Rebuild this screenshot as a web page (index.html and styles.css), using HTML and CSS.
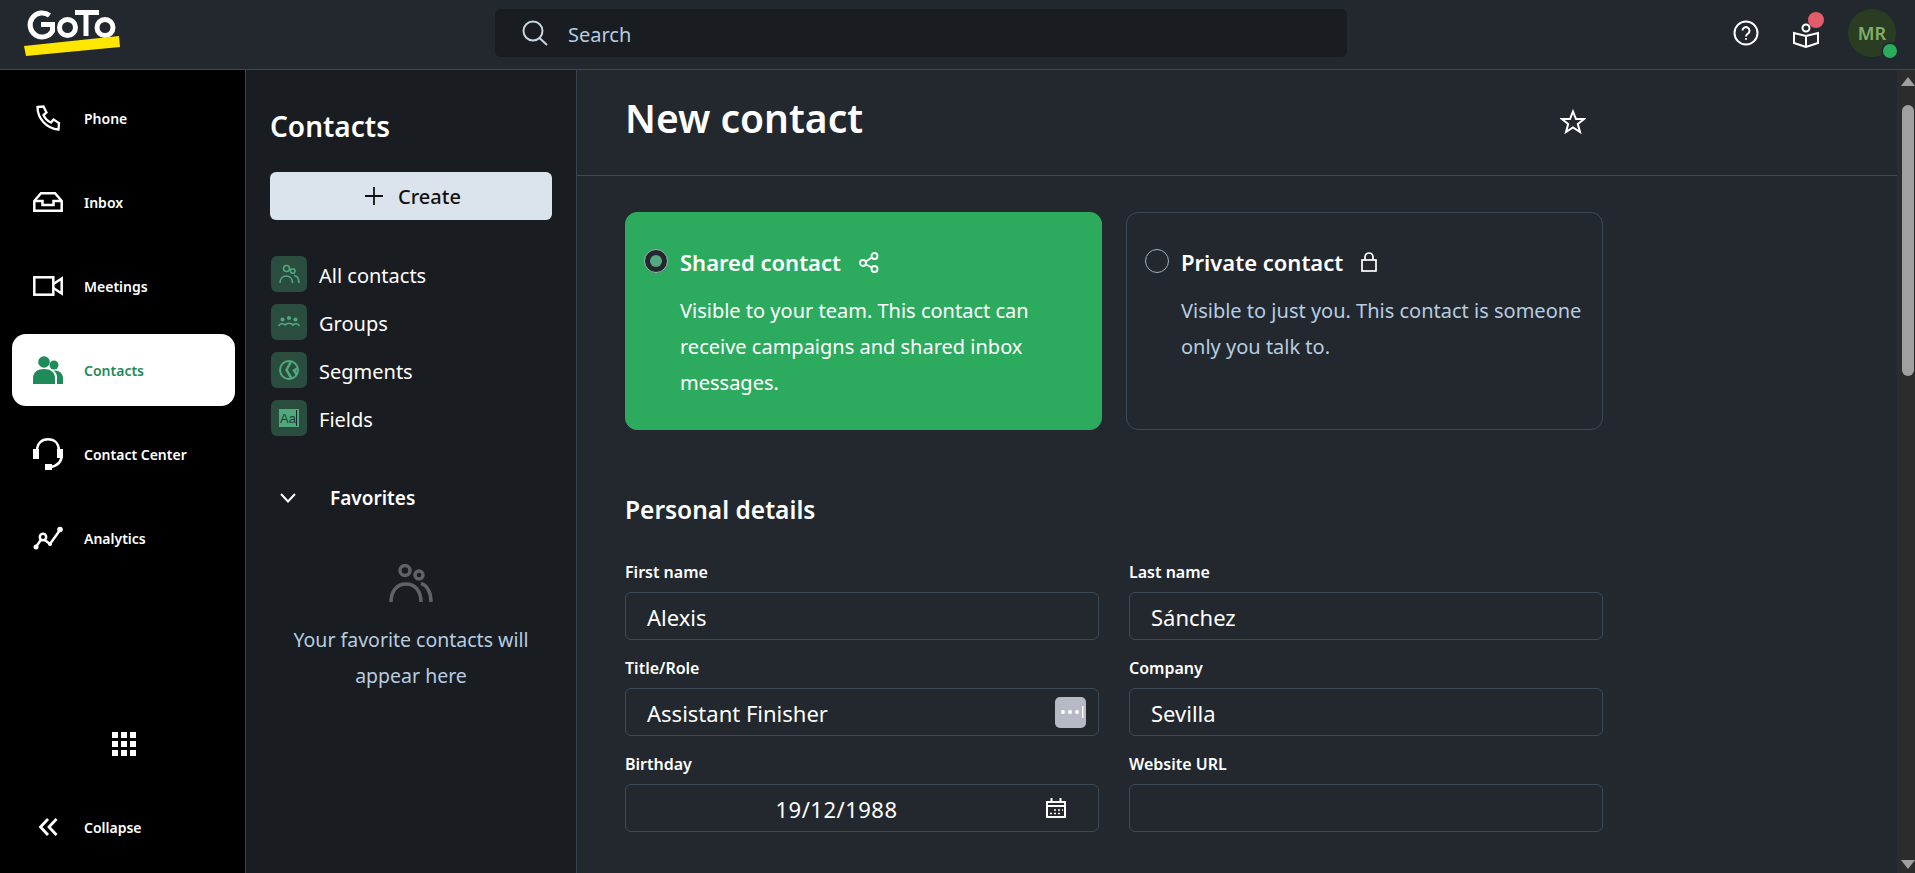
FILE: index.html
```html
<!DOCTYPE html>
<html lang="en">
<head>
<meta charset="utf-8">
<title>New contact</title>
<link rel="stylesheet" href="styles.css">
</head>
<body>
<div class="app">
  <header class="topbar">
    <svg class="logo" width="100" height="50" viewBox="24 8 100 50" aria-label="GoTo">
      <path d="M49.500 15.500 A12 12 0 1 0 52.500 31 V24.500 H41" fill="none" stroke="#fff" stroke-width="5"/>
      <circle cx="67.5" cy="27.5" r="8" fill="none" stroke="#fff" stroke-width="5"/>
      <path d="M75 12.5 H99 M86 12.5 V36" fill="none" stroke="#fff" stroke-width="5"/>
      <circle cx="105" cy="27.5" r="8" fill="none" stroke="#fff" stroke-width="5"/>
      <polygon points="24,46 119,36 120,47 26,56" fill="#ffe600"/>
    </svg>
    <div class="search">
      <svg width="26" height="26" viewBox="0 0 26 26" fill="none" stroke="#c8d6df" stroke-width="2"><circle cx="11" cy="11" r="9.5"/><path d="M17.5 18 L25 25"/></svg>
      <span>Search</span>
    </div>
    <div class="top-actions">
      <svg class="help" width="26" height="26" viewBox="0 0 26 26" fill="none" stroke="#fff" stroke-width="2"><circle cx="13" cy="13" r="11.5"/><path d="M9.5 10.5 a3.5 3.5 0 1 1 5.5 3 c-1.400 .9 -2 1.500 -2 3" stroke-width="2"/><circle cx="13" cy="19" r="1" fill="#fff" stroke="none"/></svg>
      <div class="book">
        <svg width="26" height="26" viewBox="0 0 26 26" fill="none" stroke="#fff" stroke-width="2"><circle cx="13" cy="5" r="3.500"/><path d="M13 24 L1 20 V10 L13 13 L25 10 V20 Z M13 13 V24"/></svg>
        <span class="dot-red"></span>
      </div>
      <div class="avatar">MR<span class="dot-green"></span></div>
    </div>
  </header>
  <div class="body">
    <nav class="rail">
      <a class="rail-item"><span class="rail-icon"><svg width="26" height="26" viewBox="0 0 26 26" fill="none" stroke="#fff" stroke-width="2.300"><path d="M2.500 2 L8.500 1.500 L11.500 7.500 L8.500 10 C10 13.500 12.500 16 16 17.500 L18.500 14.500 L24 18 L23.500 24.500 C11.500 23.500 2.500 13.500 2.500 2 Z"/></svg></span>Phone</a>
      <a class="rail-item"><span class="rail-icon"><svg width="30" height="20" viewBox="0 0 30 20" fill="none" stroke="#fff" stroke-width="2.500"><path d="M1.300 9 L8 1.300 H22 L28.700 9 V18.700 H1.300 Z"/><path d="M1.300 9 H9.500 V13 H20.500 V9 H28.700"/></svg></span>Inbox</a>
      <a class="rail-item"><span class="rail-icon"><svg width="30" height="20" viewBox="0 0 30 20" fill="none" stroke="#fff" stroke-width="2.500"><rect x="1.300" y="1.300" width="19" height="17.400"/><path d="M20.300 8 L28.700 2.500 V17.500 L20.300 12"/></svg></span>Meetings</a>
      <a class="rail-item active"><span class="rail-icon"><svg width="30" height="28" viewBox="0 0 30 28" fill="#1f8a5a"><circle cx="11" cy="6" r="5.800"/><circle cx="21" cy="9" r="4.500"/><path d="M0 28 V22 C0 16 5 13 11 13 C17 13 22 16 22 22 V28 Z"/><path d="M24 28 V21 C24 18 22.500 16 20.500 14.500 C26 14 30 17 30 22 V28 Z"/></svg></span>Contacts</a>
      <a class="rail-item"><span class="rail-icon"><svg width="30" height="32" viewBox="0 0 30 32" fill="none" stroke="#fff" stroke-width="2.500"><path d="M4 13 C4 5 9 1.300 15 1.300 C21 1.300 26 5 26 13"/><path d="M28.700 17 C28.700 24 24 28 17 29"/><rect x="0" y="11" width="6" height="10" fill="#fff" stroke="none"/><rect x="24" y="11" width="6" height="9" fill="#fff" stroke="none"/><rect x="12" y="26" width="7" height="6" fill="#fff" stroke="none"/></svg></span>Contact Center</a>
      <a class="rail-item"><span class="rail-icon"><svg width="30" height="24" viewBox="0 0 30 24" fill="none" stroke="#fff" stroke-width="2.500"><path d="M3 21 L9 12 L17 18 L27 4"/><circle cx="3" cy="21" r="2.500" fill="#fff" stroke="none"/><circle cx="10" cy="11" r="3.200" fill="#000"/><circle cx="17" cy="18" r="2" fill="#fff" stroke="none"/><circle cx="27" cy="3.500" r="2.800" fill="#fff" stroke="none"/></svg></span>Analytics</a>
      <div class="apps">
        <svg width="24" height="24" viewBox="0 0 24 24" fill="#fff"><rect width="6" height="6"/><rect x="9" width="6" height="6"/><rect x="18" width="6" height="6"/><rect y="9" width="6" height="6"/><rect x="9" y="9" width="6" height="6"/><rect x="18" y="9" width="6" height="6"/><rect y="18" width="6" height="6"/><rect x="9" y="18" width="6" height="6"/><rect x="18" y="18" width="6" height="6"/></svg>
      </div>
      <a class="rail-item collapse"><span class="rail-icon"><svg width="20" height="18" viewBox="0 0 20 18" fill="none" stroke="#fff" stroke-width="2.800"><path d="M10 1 L2.500 9 L10 17 M18.500 1 L11 9 L18.500 17"/></svg></span>Collapse</a>
    </nav>
    <aside class="panel">
      <h2 class="panel-title">Contacts</h2>
      <button class="create"><svg width="18" height="18" viewBox="0 0 18 18" stroke="#111" stroke-width="1.800"><path d="M9 0 V18 M0 9 H18"/></svg>Create</button>
      <ul class="plist">
        <li><span class="tile"><svg width="36" height="36" viewBox="0 0 36 36" fill="none" stroke="#4fa87e" stroke-width="1.600"><circle cx="15.500" cy="12.500" r="3"/><circle cx="21.700" cy="15" r="2.300"/><path d="M9 27 C9 23 11.500 20 15.200 20 C19 20 21.500 23 21.500 27"/><path d="M23 19.500 C26 20 28 23 28 27"/></svg></span><span class="plabel">All contacts</span></li>
        <li><span class="tile"><svg width="36" height="36" viewBox="0 0 36 36" fill="none" stroke="#4fa87e" stroke-width="1.500"><circle cx="11.500" cy="15.500" r="1.300" fill="#4fa87e"/><circle cx="18" cy="14" r="1.300" fill="#4fa87e"/><circle cx="24.500" cy="15.500" r="1.300" fill="#4fa87e"/><path d="M7.500 22 C9 19.500 12 19 14 21 C15.500 18.500 20.500 18.500 22 21 C24 19 27 19.500 28.500 22"/></svg></span><span class="plabel">Groups</span></li>
        <li><span class="tile"><svg width="36" height="36" viewBox="0 0 36 36" fill="none" stroke="#4fa87e" stroke-width="2"><circle cx="18" cy="18" r="9"/><path d="M20 9.500 L15.500 18 L20.500 26.500 M27 16 L23 18.500 L26 23" stroke-width="2.500"/></svg></span><span class="plabel">Segments</span></li>
        <li><span class="tile"><svg width="36" height="36" viewBox="0 0 36 36"><rect x="8" y="9" width="20" height="18" fill="#4fa87e"/><text x="9" y="23" class="aa">Aa</text><path d="M25.500 10 V26" stroke="#1a2a22" stroke-width="1"/></svg></span><span class="plabel">Fields</span></li>
      </ul>
      <div class="fav-head"><svg width="16" height="10" viewBox="0 0 16 10" fill="none" stroke="#fff" stroke-width="2"><path d="M1 1 L8 8.500 L15 1"/></svg><span>Favorites</span></div>
      <div class="fav-empty">
        <svg width="44" height="38" viewBox="0 0 44 38" fill="none" stroke="#5f6266" stroke-width="3.500"><circle cx="16" cy="6.500" r="5"/><circle cx="30" cy="11" r="4"/><path d="M2 38 C2 27 8 20 17 20 C26 20 32 27 32 38"/><path d="M32 19.500 C38 21 42 28 42 38"/></svg>
        <p>Your favorite contacts will<br>appear here</p>
      </div>
    </aside>
    <main class="main">
      <div class="main-head">
        <h1>New contact</h1>
        <svg class="star" width="26" height="26" viewBox="0 0 26 26" fill="none" stroke="#fff" stroke-width="2"><path d="M13 2.500 L16 10 H24 L17.800 15 L20 23 L13 18.500 L6 23 L8.200 15 L2 10 H10 Z"/></svg>
      </div>
      <div class="content">
        <div class="cards">
          <section class="card selected">
            <span class="radio on"></span>
            <div>
              <div class="card-title">Shared contact
                <svg width="20" height="21" viewBox="0 0 20 21" fill="none" stroke="#fff" stroke-width="1.800"><circle cx="15.500" cy="4" r="3"/><circle cx="4" cy="11" r="3"/><circle cx="15.500" cy="17" r="3"/><path d="M7 9.500 L12.800 5.500 M7 12.500 L12.800 15.500"/></svg>
              </div>
              <p>Visible to your team. This contact can receive campaigns and shared inbox messages.</p>
            </div>
          </section>
          <section class="card">
            <span class="radio"></span>
            <div>
              <div class="card-title">Private contact
                <svg width="16" height="20" viewBox="0 0 16 20" fill="none" stroke="#fff" stroke-width="1.700"><rect x="1" y="8" width="14" height="11"/><path d="M4 8 V5 a4 4 0 0 1 8 0 V8"/></svg>
              </div>
              <p class="muted">Visible to just you. This contact is someone only you talk to.</p>
            </div>
          </section>
        </div>
        <h2 class="section">Personal details</h2>
        <div class="form">
          <div class="field"><label>First name</label><div class="input">Alexis</div></div>
          <div class="field"><label>Last name</label><div class="input">Sánchez</div></div>
          <div class="field"><label>Title/Role</label><div class="input"><span class="grow">Assistant Finisher</span>
            <span class="pw"><svg width="26" height="14" viewBox="0 0 26 14" fill="#fff"><circle cx="5" cy="7" r="2"/><circle cx="12" cy="7" r="2"/><circle cx="19" cy="7" r="2"/><rect x="24" y="1" width="1.500" height="12"/></svg></span></div></div>
          <div class="field"><label>Company</label><div class="input">Sevilla</div></div>
          <div class="field"><label>Birthday</label><div class="input date"><span class="grow center">19/12/1988</span>
            <svg width="20" height="20" viewBox="0 0 20 20" fill="none" stroke="#fff" stroke-width="2"><path d="M1 4 H19 V19 H1 Z M1 8 H19 M5.500 0 V4 M14.500 0 V4"/><path d="M8 12 H10 M12 12 H14 M16 12 H17 M4 15.500 H6 M8 15.500 H10 M12 15.500 H14" stroke-width="1.600"/></svg></div></div>
          <div class="field"><label>Website URL</label><div class="input"></div></div>
        </div>
      </div>
      <div class="scrollbar"><span class="arrow up"></span><span class="thumb"></span><span class="arrow down"></span></div>
    </main>
  </div>
</div>
</body>
</html>
```

FILE: styles.css
```css
* { box-sizing: border-box; }
html, body { margin: 0; height: 100%; overflow: hidden; }
body { font-family: "Noto Sans", sans-serif; background: #22282e; color: #fff; }
h1, h2, p, ul { margin: 0; padding: 0; }

.app { display: flex; flex-direction: column; height: 873px; width: 1915px; }

.topbar { flex: 0 0 70px; display: flex; align-items: center; background: #22282e; border-bottom: 1px solid #3c4a58; position: relative; }
.logo { margin-left: 24px; flex: none; align-self: flex-start; margin-top: 8px; }
.search { margin-left: 371px; width: 852px; height: 48px; background: #191c20; border-radius: 6px; display: flex; align-items: center; gap: 20px; padding-left: 27px; font-size: 20px; color: #b6cde0; margin-top: -3px; }
.search span { padding-top: 2px; }
.top-actions { margin-left: auto; display: flex; align-items: center; padding-right: 19px; }
.help { margin-right: 34px; margin-top: -3px; }
.book { position: relative; width: 26px; height: 26px; margin-right: 29px; margin-top: 3px; }
.dot-red { position: absolute; left: 15px; top: -11px; width: 16px; height: 16px; border-radius: 50%; background: #e25c6a; }
.avatar { position: relative; width: 48px; height: 48px; border-radius: 50%; background: #2a3d22; color: #7fb069; font-weight: 600; font-size: 18px; display: flex; align-items: center; justify-content: center; margin-top: -3px; }
.dot-green { position: absolute; right: -3px; bottom: -3px; width: 18px; height: 18px; border-radius: 50%; background: #2bab5e; border: 2px solid #22282e; }

.body { flex: 1; display: flex; min-height: 0; }

.rail { flex: 0 0 246px; background: #000; border-right: 1px solid #3a4450; display: flex; flex-direction: column; padding: 12px 10px 10px 12px; gap: 12px; }
.rail-item { height: 72px; flex: none; display: flex; align-items: center; border-radius: 14px; font-size: 14px; font-weight: 600; color: #fff; }
.rail-icon { width: 72px; display: flex; justify-content: center; align-items: center; flex: none; }
.rail-item.active { background: #fff; color: #1f8a5a; }
.apps { margin-top: auto; margin-bottom: -1px; height: 72px; display: flex; align-items: center; justify-content: center; }

.panel { flex: 0 0 331px; background: #191c20; border-right: 1px solid #3a4450; padding: 38px 24px 0; }
.panel-title { font-size: 28px; font-weight: 600; line-height: 36px; }
.create { margin-top: 28px; width: 282px; height: 48px; padding: 0 0 0 4px; background: #dbe3ec; border: 0; border-radius: 6px; display: flex; align-items: center; justify-content: center; gap: 15px; font: 500 20px "Noto Sans", sans-serif; color: #111; }
.plist { list-style: none; margin-top: 36px; display: flex; flex-direction: column; gap: 12px; }
.plist li { display: flex; align-items: center; gap: 12px; height: 36px; font-size: 20px; padding-left: 1px; }
.plabel { padding-top: 2px; }
.tile { width: 36px; height: 36px; background: #2b4d40; border-radius: 6px; flex: none; display: block; }
.tile svg { display: block; }
.aa { font-family: "Liberation Sans", sans-serif; font-size: 13px; fill: #1f3d30; }
.fav-head { margin-top: 48px; height: 28px; display: flex; align-items: center; font-size: 19px; font-weight: 600; padding-left: 10px; }
.fav-head svg { margin-right: 34px; flex: none; }
.fav-empty { margin-top: 52px; display: flex; flex-direction: column; align-items: center; }
.fav-empty p { margin-top: 20px; text-align: center; font-size: 19.5px; line-height: 36px; color: #b6cde0; white-space: nowrap; }

.main { flex: 1; position: relative; min-width: 0; background: #22282e; }
.main-head { height: 106px; border-bottom: 1px solid #3c4a58; padding: 20px 311px 0 48px; margin-right: 18px; display: flex; justify-content: space-between; align-items: flex-start; }
.main-head h1 { font-size: 39px; font-weight: 600; line-height: 56px; }
.star { margin-top: 19px; }
.content { padding: 36px 0 0 48px; width: 1026px; }
.cards { display: grid; grid-template-columns: 477px 477px; gap: 24px; }
.card { height: 218px; border: 1px solid #3c4a58; border-radius: 12px; display: flex; padding: 35px 18px 0 18px; gap: 12px; }
.card.selected { background: #2cab5f; border-color: #2cab5f; }
.radio { width: 24px; height: 24px; border-radius: 50%; border: 1px solid #9fb0bd; flex: none; display: block; position: relative; margin-top: 1px; }
.radio.on { background: #22282e; }
.radio.on::after { content: ""; position: absolute; inset: 5px; border-radius: 50%; background: #56a97f; }
.card-title { font-size: 22px; font-weight: 600; line-height: 28px; display: flex; align-items: center; gap: 18px; }
.card p { margin-top: 17px; font-size: 20px; line-height: 36px; }
.card p.muted { color: #b6cde0; }
.section { margin-top: 64px; font-size: 24.5px; font-weight: 600; line-height: 32px; }
.form { margin-top: 34px; display: grid; grid-template-columns: 474px 474px; column-gap: 30px; row-gap: 16px; }
.field label { display: block; font-size: 16px; font-weight: 600; line-height: 24px; }
.input { margin-top: 8px; height: 48px; border: 1px solid #3c4a58; border-radius: 6px; display: flex; align-items: center; padding: 2px 12px 0 21px; font-size: 22px; }
.grow { flex: 1; }
.center { text-align: center; padding-right: 20px; letter-spacing: 0.5px; }
.date { padding-right: 32px; }
.pw { width: 31px; height: 31px; background: #b5bac4; border-radius: 5px; display: flex; align-items: center; justify-content: center; margin-top: -2px; }
.date svg { margin-top: -2px; }

.scrollbar { position: absolute; top: 0; right: 0; bottom: 0; width: 18px; padding-left: 3px; background: #2c2c2c; display: flex; flex-direction: column; align-items: center; }
.thumb { width: 12px; height: 271px; background: #a0a0a0; border-radius: 6px; margin-top: 19px; flex: none; }
.arrow { display: block; width: 0; height: 0; flex: none; border-left: 7px solid transparent; border-right: 7px solid transparent; }
.arrow.up { border-bottom: 9px solid #a0a0a0; margin-top: 7px; }
.arrow.down { border-top: 9px solid #a0a0a0; margin-top: auto; margin-bottom: 4px; }
```
